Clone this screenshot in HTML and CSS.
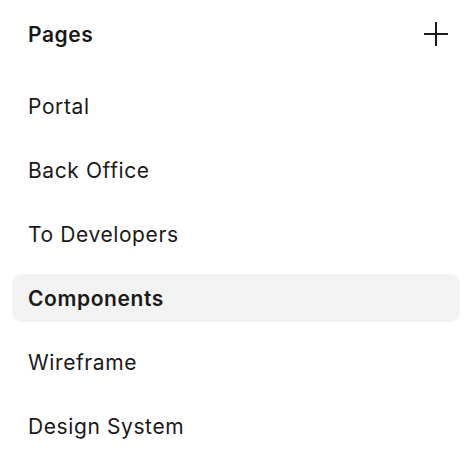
FILE: index.html
```html
<!DOCTYPE html>
<html>
<head>
<meta charset="utf-8">
<link rel="stylesheet" href="styles.css">
</head>
<body>
<div class="panel">
  <div class="header">
    <span class="title">Pages</span>
    <button class="add" aria-label="Add page">
      <svg width="24" height="24" viewBox="0 0 24 24"><path d="M12 0V24M0 12H24" stroke="#1a1a1a" stroke-width="2" fill="none"/></svg>
    </button>
  </div>
  <ul class="list">
    <li class="item">Portal</li>
    <li class="item">Back Office</li>
    <li class="item">To Developers</li>
    <li class="item active">Components</li>
    <li class="item">Wireframe</li>
    <li class="item">Design System</li>
  </ul>
</div>
</body>
</html>
```
FILE: styles.css
```css
html, body {
  margin: 0;
  padding: 0;
  background: #ffffff;
}
body {
  font-family: Inter, "Noto Sans", sans-serif;
  color: #1a1a1a;
  letter-spacing: 0.6px;
}
.panel {
  padding: 10px 14px 0 12px;
  display: flex;
  flex-direction: column;
  gap: 24px;
}
.header {
  height: 48px;
  display: flex;
  align-items: center;
  justify-content: space-between;
  padding: 0 0 0 16px;
}
.title {
  font-size: 21px;
  font-weight: 600;
}
.add {
  border: none;
  background: none;
  padding: 0;
  width: 24px;
  height: 24px;
  display: flex;
  margin-right: 12px;
}
.list {
  list-style: none;
  margin: 0;
  padding: 0;
  display: flex;
  flex-direction: column;
  gap: 16px;
}
.item {
  height: 48px;
  display: flex;
  align-items: center;
  padding-left: 16px;
  font-size: 21px;
  font-weight: 400;
  border-radius: 10px;
}
.item.active {
  background: #f3f3f3;
  font-weight: 600;
}
```
